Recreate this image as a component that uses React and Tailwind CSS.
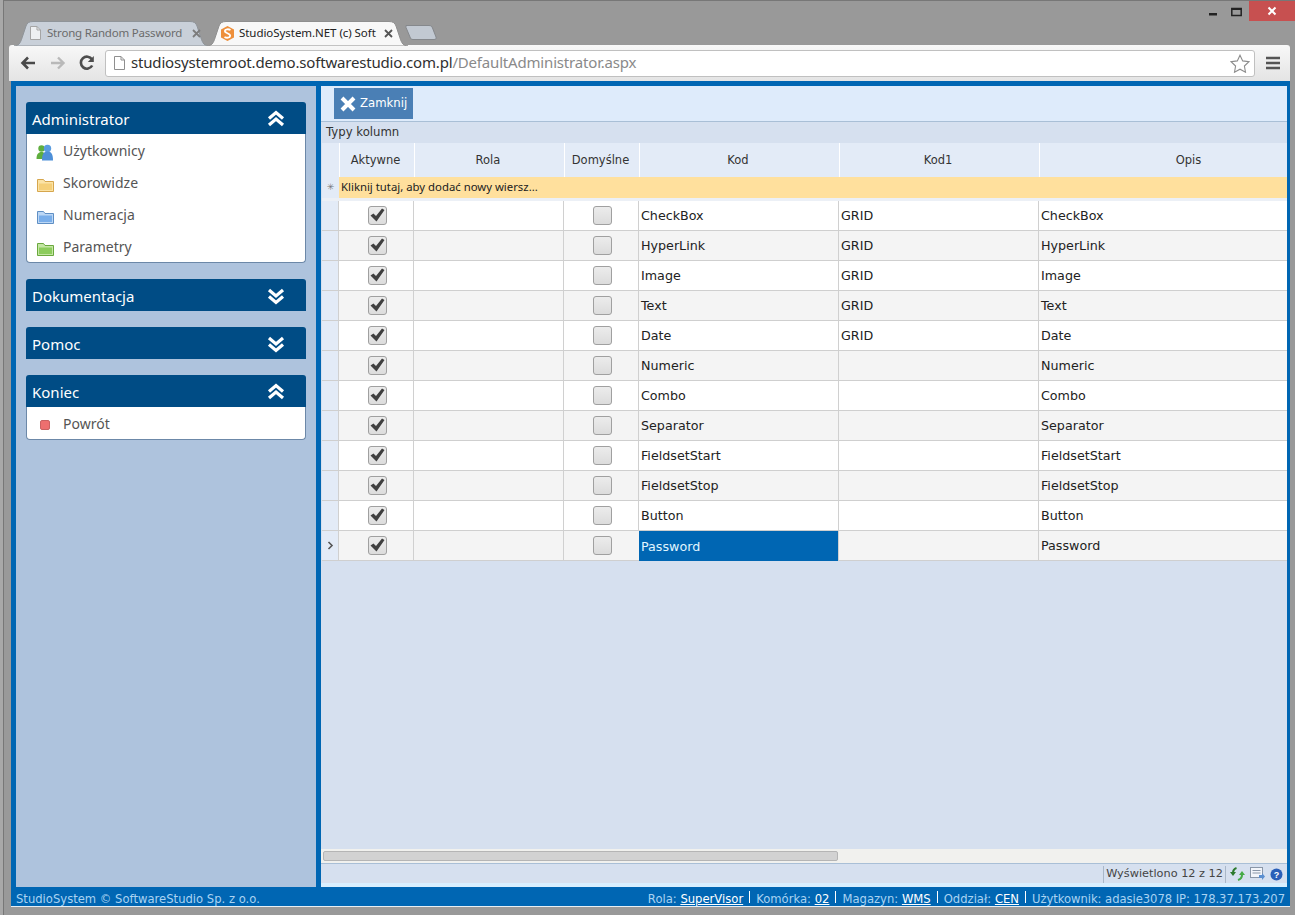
import React from "react";

const UI = "font-['Noto_Sans','Open_Sans',sans-serif]";
const V = "font-['DejaVu_Sans','Verdana',sans-serif]";

const Doc = ({ c = "#9a9a9a", fill = "#fff" }) => (
  <svg width="11" height="14" viewBox="0 0 11 14" className="shrink-0">
    <path d="M.5.5h6.5l3.500 3.500v9.500h-10z" fill={fill} stroke={c} />
    <path d="M7 .5v3.500h3.500" fill="none" stroke={c} />
  </svg>
);

const TabShape = ({ w, fill, stroke }) => (
  <svg width={w} height="25" viewBox={`0 0 ${w} 25`} className="absolute left-0 top-0">
    <path
      d={`M0 25C6 25 7 20 9 14L12 5C13 2 15 .5 19 .5H${w - 19}C${w - 15} .5 ${w - 13} 2 ${w - 12} 5L${w - 9} 14C${w - 7} 20 ${w - 6} 25 ${w} 25Z`}
      fill={fill}
      stroke={stroke}
    />
  </svg>
);

const TabX = ({ c }) => (
  <svg width="9" height="9" viewBox="0 0 9 9" className="shrink-0">
    <path d="M1 1l7 7M8 1l-7 7" stroke={c} strokeWidth="1.800" />
  </svg>
);

function Chrome() {
  return (
    <div className="relative h-[45px] shrink-0 border-t border-[#777] bg-[#999]">
      <div className={`flex h-[44px] items-end pl-[10px] ${UI}`}>
        <div className="relative z-0 h-[24px] w-[195px]">
          <TabShape w={195} fill="#c9d0d9" stroke="#8f9499" />
          <div className="relative flex h-full items-center pl-[16px] text-[11.5px] tracking-[-0.2px] text-[#6b6b6b]">
            <Doc c="#a5a5a5" fill="#eef0f2" />
            <span className="ml-[6px] w-[136px] whitespace-nowrap">Strong Random Password</span>
            <span className="ml-[9px]"><TabX c="#7c7c7c" /></span>
          </div>
        </div>
        <div className="relative z-10 -ml-[2px] h-[24px] w-[201px]">
          <TabShape w={201} fill="#f8f8f8" stroke="#8f8f8f" />
          <div className="relative flex h-full items-center pl-[14px] text-[11.5px] tracking-[-0.05px] text-[#222]">
            <svg width="13" height="15" viewBox="0 0 13 15" className="shrink-0">
              <path d="M6.500 0L13 3.500v8L6.500 15 0 11.500v-8z" fill="#ee8f3a" />
              <path d="M9.500 4C7.500 2.800 4 3 3.800 5 3.700 7.300 9.300 7.200 9.200 9.800 9 12 5.500 12.200 3.500 11" fill="none" stroke="#fff" strokeWidth="1.800" />
            </svg>
            <span className="ml-[5px] w-[137px] whitespace-nowrap">StudioSystem.NET (c) Soft</span>
            <span className="ml-[8px]"><TabX c="#555" /></span>
          </div>
        </div>
        <svg width="33" height="15" viewBox="0 0 33 15" className="z-0 mb-[5px] -ml-[3px]">
          <path d="M1 .5H24C26 .5 27 1.500 27.500 3L31 12C31.500 13.500 31 14.500 29 14.500H8C6 14.500 5.500 13.500 5 12L1 2.500Z" fill="#c2c9d2" stroke="#85888c" />
        </svg>
      </div>
      <div className="absolute right-0 top-0 flex items-start">
        <svg width="10" height="22" viewBox="0 0 10 22" className="mr-[13px]">
          <rect x="1" y="12" width="8" height="2.500" fill="#222" />
        </svg>
        <svg width="11" height="22" viewBox="0 0 11 22" className="mr-[7px]">
          <rect x=".8" y="7.500" width="9.400" height="7" fill="none" stroke="#222" strokeWidth="1.500" />
          <rect x=".8" y="7" width="9.400" height="2" fill="#222" />
        </svg>
        <div className="flex h-[20px] w-[46px] items-center justify-center bg-[#c75050]">
          <svg width="10" height="10" viewBox="0 0 10 10">
            <path d="M1.500 1.500l7 7M8.500 1.500l-7 7" stroke="#fff" strokeWidth="2" />
          </svg>
        </div>
      </div>
    </div>
  );
}

function AddressBar() {
  return (
    <div className="flex h-[36px] shrink-0 items-center rounded-t-[3px] bg-gradient-to-b from-[#f8f8f8] to-[#e4e4e4] pl-[11px]">
      <svg width="16" height="14" viewBox="0 0 16 14" className="shrink-0">
        <path d="M15 7H3M8 1.500L2.500 7 8 12.500" fill="none" stroke="#4a4a4a" strokeWidth="2.600" />
      </svg>
      <svg width="16" height="14" viewBox="0 0 16 14" className="ml-[14px] shrink-0">
        <path d="M1 7h12M8 1.500L13.500 7 8 12.500" fill="none" stroke="#b9b9b9" strokeWidth="2.400" />
      </svg>
      <svg width="16" height="16" viewBox="0 0 16 16" className="ml-[13px] shrink-0">
        <path d="M13.200 10.500A6 6 0 1 1 13 4.500" fill="none" stroke="#4d4d4d" strokeWidth="2.600" />
        <path d="M14.800 1v6h-6z" fill="#4d4d4d" />
      </svg>
      <div className="ml-[10px] flex h-[27px] w-[1150px] shrink-0 items-center rounded-[3px] border border-[#c0c0c0] bg-white pl-[8px] pr-[4px]">
        <Doc c="#8f8f8f" />
        <span className={`ml-[6px] -mt-[2px] whitespace-nowrap text-[15px] leading-none tracking-[-0.18px] text-[#303030] ${UI}`}>
          studiosystemroot.demo.softwarestudio.com.pl<span className="text-[#8a8a8a]">/DefaultAdministrator.aspx</span>
        </span>
        <svg width="20" height="19" viewBox="0 0 20 19" className="ml-auto">
          <path d="M10 1.200l2.700 5.700 6.200.8-4.500 4.300 1.100 6.200L10 15.200l-5.500 3 1.100-6.200L1.100 7.700l6.200-.8z" fill="#fff" stroke="#8c8c8c" strokeWidth="1.100" />
        </svg>
      </div>
      <svg width="14" height="14" viewBox="0 0 14 14" className="ml-[11px] shrink-0">
        <path d="M0 2h14M0 7h14M0 12h14" stroke="#555" strokeWidth="2.500" />
      </svg>
    </div>
  );
}

const Chev = ({ up }) => (
  <svg width="18" height="18" viewBox="0 0 18 18" className={up ? "" : "rotate-180"}>
    <path d="M2 8.500L9 2.500l7 6M2 15L9 9l7 6" fill="none" stroke="#fff" strokeWidth="3.200" />
  </svg>
);

const Folder = ({ a, b, e }) => (
  <svg width="17" height="14" viewBox="0 0 17 14" className="mt-[6px]">
    <path d="M.5 13.500V1.500h6l1.500 2h8.500v10z" fill={a} stroke={e} />
    <rect x="2" y="5.500" width="13" height="6.500" fill={b} />
  </svg>
);

const Users = () => (
  <svg width="18" height="17" viewBox="0 0 18 17" className="mt-[4px]">
    <circle cx="5.500" cy="4.500" r="3.200" fill="#5fae3e" />
    <path d="M0.500 15c0-5 2-7 5-7s5 2 5 7z" fill="#5fae3e" />
    <circle cx="11.500" cy="4.500" r="3.700" fill="#5b9de0" />
    <path d="M6 16.500c0-6 1.500-9 5.500-9s5.500 3 5.500 9z" fill="#4d8fd8" />
  </svg>
);

const Stop = () => (
  <div className="mt-[4px] h-[10px] w-[10px] rounded-[2px] border border-[#c96262] bg-[#ee6f6f]" />
);

const Panel = ({ title, open, items = [] }) => (
  <div className="mb-[16px]">
    <div className={`flex h-[32px] items-center justify-between rounded-t-[3px] bg-[#004c85] pl-[6px] pr-[21px] pt-[2px] text-[15px] text-white ${UI}`}>
      <span>{title}</span>
      <Chev up={open} />
    </div>
    {items.length > 0 && (
      <div className="rounded-b-[4px] border border-t-0 border-[#6c88a8] bg-white">
        {items.map(([icon, label]) => (
          <div key={label} className={`flex h-[32px] items-center text-[14px] text-[#555] ${UI}`}>
            <div className="flex w-[36px] justify-center">{icon}</div>
            <span>{label}</span>
          </div>
        ))}
      </div>
    )}
  </div>
);

function Sidebar() {
  return (
    <div className="w-[300px] shrink-0 bg-[#aec3dd] px-[10px] pt-[16px]">
      <Panel
        title="Administrator"
        open
        items={[
          [<Users />, "Użytkownicy"],
          [<Folder a="#fbe3a6" b="#f5cf78" e="#d6a64d" />, "Skorowidze"],
          [<Folder a="#bcd7f5" b="#79aeea" e="#5f8fc4" />, "Numeracja"],
          [<Folder a="#c4e6a4" b="#8ccc5c" e="#6aa83e" />, "Parametry"],
        ]}
      />
      <Panel title="Dokumentacja" />
      <Panel title="Pomoc" />
      <Panel title="Koniec" open items={[[<Stop />, "Powrót"]]} />
    </div>
  );
}

const HEAD = "grid grid-cols-[17px_75px_150px_75px_200px_200px_248px]";
const ROW = "grid grid-cols-[16px_75px_150px_75px_200px_200px_249px]";
const rows = [
  ["CheckBox", "GRID"],
  ["HyperLink", "GRID"],
  ["Image", "GRID"],
  ["Text", "GRID"],
  ["Date", "GRID"],
  ["Numeric", ""],
  ["Combo", ""],
  ["Separator", ""],
  ["FieldsetStart", ""],
  ["FieldsetStop", ""],
  ["Button", ""],
  ["Password", ""],
];

const Check = ({ on }) => (
  <div className="mb-[1px] ml-[2px] flex h-[19px] w-[19px] items-center justify-center rounded-[3px] border border-[#a0a0a0] bg-gradient-to-b from-[#ececec] to-[#dcdcdc]">
    {on && (
      <svg width="15" height="14" viewBox="0 0 15 14">
        <path d="M0.500 7.500L3.500 5.500 6 8 12 .5 14.500 2 6.500 13.500z" fill="#3e3e3e" />
      </svg>
    )}
  </div>
);

function Grid() {
  const cell = "border-l border-[#d0d0d0] flex items-center pt-[1px]";
  return (
    <div className={`ml-[1px] w-[965px] text-[12.7px] text-[#222] ${V}`}>
      <div className={`${HEAD} h-[34px] bg-[#e3ebf7] text-[11.5px] text-[#333]`}>
        {["", "Aktywne", "Rola", "Domyślne", "Kod", "Kod1"].map((h, i) => (
          <div key={i} className={`flex items-center justify-center pr-[3px] pt-[1px] ${i ? "border-l border-white" : ""}`}>
            {h}
          </div>
        ))}
        <div className="flex items-center justify-center border-l border-white pl-[50px] pt-[1px]">Opis</div>
      </div>
      <div className={`${HEAD} h-[21px]`}>
        <div className="flex items-center justify-center bg-[#e3ebf7] text-[9px] leading-none text-[#777]">✳</div>
        <div className={`col-span-6 flex items-center bg-[#ffe09d] pb-[2px] pl-[2px] text-[11.35px] text-[#222] ${UI}`}>
          Kliknij tutaj, aby dodać nowy wiersz...
        </div>
      </div>
      <div className="h-[3px] bg-[#ecf0f6]" />
      {rows.map(([k, g], i) => {
        const last = i === rows.length - 1;
        return (
          <div key={k} className={`${ROW} h-[30px] border-b border-[#cfcfcf] ${i % 2 ? "bg-[#f4f4f4]" : "bg-white"}`}>
            <div className="flex items-center justify-center bg-[#e3ebf7]">
              {last && (
                <svg width="7" height="9" viewBox="0 0 7 9">
                  <path d="M1.500 1l3.500 3.500L1.500 8" fill="none" stroke="#555" strokeWidth="1.600" />
                </svg>
              )}
            </div>
            <div className="flex items-center justify-center border-l border-[#d0d0d0]"><Check on /></div>
            <div className={cell} />
            <div className="flex items-center justify-center border-l border-[#d0d0d0]"><Check /></div>
            {last ? (
              <div className="-mb-[1px] ml-[1px] flex items-center bg-[#0066b3] pl-[2px] pt-[2px] text-[#e0f5ff]">{k}</div>
            ) : (
              <div className={`${cell} pl-[2px]`}>{k}</div>
            )}
            <div className={`${cell} pl-[2px]`}>{g}</div>
            <div className={`${cell} pl-[2px]`}>{k}</div>
          </div>
        );
      })}
    </div>
  );
}

function Main() {
  return (
    <div className="ml-[5px] flex w-[966px] shrink-0 flex-col bg-[#d6e0ef]">
      <div className="flex h-[36px] shrink-0 items-start border-b border-[#a9bfd6] bg-[#deebfb] pl-[13px] pt-[2px]">
        <div className={`flex h-[31px] w-[79px] items-center bg-[#4a7fb5] pl-[6px] text-[11.7px] text-white ${V}`}>
          <svg width="16" height="16" viewBox="0 0 16 16" className="shrink-0">
            <path d="M2 2l12 12M14 2L2 14" stroke="#fff" strokeWidth="4" />
          </svg>
          <span className="ml-[4px]">Zamknij</span>
        </div>
      </div>
      <div className={`flex h-[21px] shrink-0 items-center pl-[5px] text-[11.7px] text-[#333] ${V}`}>Typy kolumn</div>
      <Grid />
      <div className="flex-1" />
      <div className="h-[14px] shrink-0 bg-[#f1f1ee] pl-[2px] pt-[2px]">
        <div className="h-[10px] w-[515px] rounded-[2px] border border-[#b5b5b5] bg-[#d2d2d2]" />
      </div>
      <div className={`flex h-[20px] shrink-0 items-center justify-end border-t border-[#a9bfd6] pr-[3px] pt-[1px] text-[11.3px] text-[#444] ${V}`}>
        <span className="flex h-[17px] items-center border-x border-[#a9b7c8] px-[2px]">Wyświetlono 12 z 12</span>
        <svg width="15" height="14" viewBox="0 0 15 14" className="ml-[4px]">
          <path d="M6.500 1C3.500 2 3 4 3 6" fill="none" stroke="#2c7a2c" strokeWidth="2" />
          <path d="M0 5h6l-3 4z" fill="#2c7a2c" />
          <path d="M8 13c3-1 4-3 4-5" fill="none" stroke="#46ab46" strokeWidth="2" />
          <path d="M9 8h6l-3-4z" fill="#46ab46" />
        </svg>
        <svg width="15" height="14" viewBox="0 0 15 14" className="ml-[5px]">
          <rect x=".5" y=".5" width="12" height="10" fill="#f2f5fa" stroke="#8a97a8" />
          <path d="M2.500 3.500h8M2.500 6h8" stroke="#8a97a8" />
          <path d="M9 8h3V6l3 3.500-3 3.500v-2H9z" fill="#5b8fd0" />
        </svg>
        <svg width="13" height="13" viewBox="0 0 13 13" className="ml-[5px] mr-[1px]">
          <circle cx="6.500" cy="6.500" r="6" fill="#2a5fb8" />
          <text x="6.500" y="10" textAnchor="middle" fontSize="9" fontWeight="700" fill="#fff" fontFamily="Liberation Sans">?</text>
        </svg>
      </div>
      <div className="h-[4px] shrink-0 bg-[#d8efff]" />
    </div>
  );
}

const L = ({ children }) => <span className="text-white underline">{children}</span>;
const Sep = () => <span className="mx-[6px] inline-block h-[12px] w-[1px] bg-white align-[0px]" />;

function Footer() {
  return (
    <div className={`flex h-[20px] shrink-0 items-center justify-between pr-[2px] pt-[6px] text-[11.6px] text-[#a9d3f2] ${V}`}>
      <span>StudioSystem © SoftwareStudio Sp. z o.o.</span>
      <span className="whitespace-nowrap">
        Rola: <L>SuperVisor</L><Sep />Komórka: <L>02</L><Sep />Magazyn: <L>WMS</L><Sep />Oddział: <L>CEN</L><Sep /><span className="tracking-[-0.05px]">Użytkownik: adasie3078 IP: 178.37.173.207</span>
      </span>
    </div>
  );
}

export default function App() {
  return (
    <div className="h-[915px] w-[1295px] overflow-hidden bg-[#a8a8a8] pl-[3px]">
      <div className="flex h-[915px] w-[1292px] flex-col border-l border-[#777] bg-[#999]">
        <Chrome />
        <div className="ml-[5px] mr-[5px] shrink-0">
          <AddressBar />
        </div>
        <div className="ml-[7px] mr-[5px] flex h-[826px] shrink-0 flex-col border-b border-[#e6eef5] bg-[#0066b3] pl-[5px] pr-[3px] pt-[5px]">
          <div className="flex h-[801px] shrink-0">
            <Sidebar />
            <Main />
          </div>
          <Footer />
        </div>
      </div>
    </div>
  );
}
